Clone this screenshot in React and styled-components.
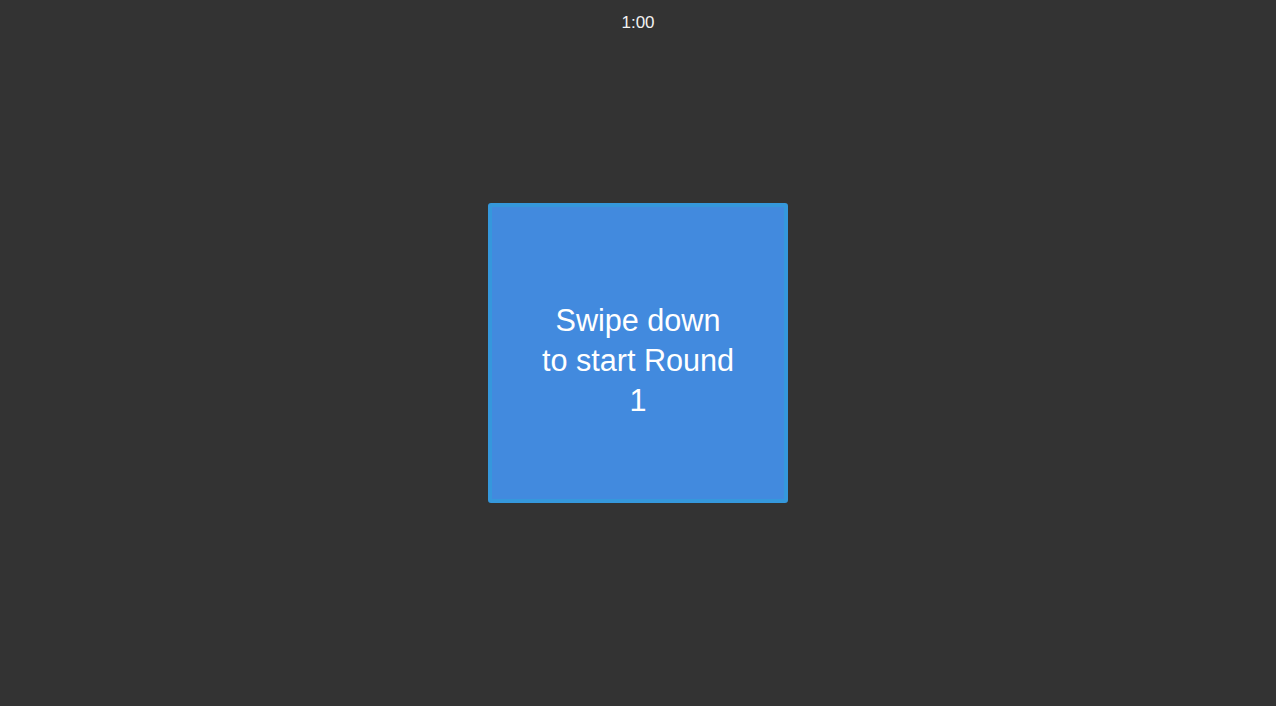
import React from "react";
import styled, { createGlobalStyle } from "styled-components";

const Global = createGlobalStyle`
  html, body { margin: 0; padding: 0; background: #333333; }
  body { font-family: "Liberation Sans", Arial, sans-serif; }
`;

const Page = styled.div`
  height: 100vh;
  display: grid;
  grid-template-rows: 1fr auto 1fr;
  justify-items: center;
  background: #333333;
`;

const Timer = styled.div`
  align-self: start;
  padding-top: 13px;
  font-size: 17px;
  line-height: 20px;
  color: #f2f2f2;
`;

const Card = styled.div`
  width: 300px;
  height: 300px;
  box-sizing: border-box;
  border: 4px solid #3598dc;
  border-radius: 3px;
  background: #428ade;
  display: flex;
  align-items: center;
  justify-content: center;
  padding: 14px 20px 0;
`;

const Message = styled.div`
  color: #ffffff;
  font-size: 30.6px;
  line-height: 40px;
  text-align: center;
`;

export default function App() {
  return (
    <>
      <Global />
      <Page>
        <Timer>1:00</Timer>
        <Card>
          <Message>
            Swipe down
            <br />
            to start Round
            <br />1
          </Message>
        </Card>
        <div />
      </Page>
    </>
  );
}
